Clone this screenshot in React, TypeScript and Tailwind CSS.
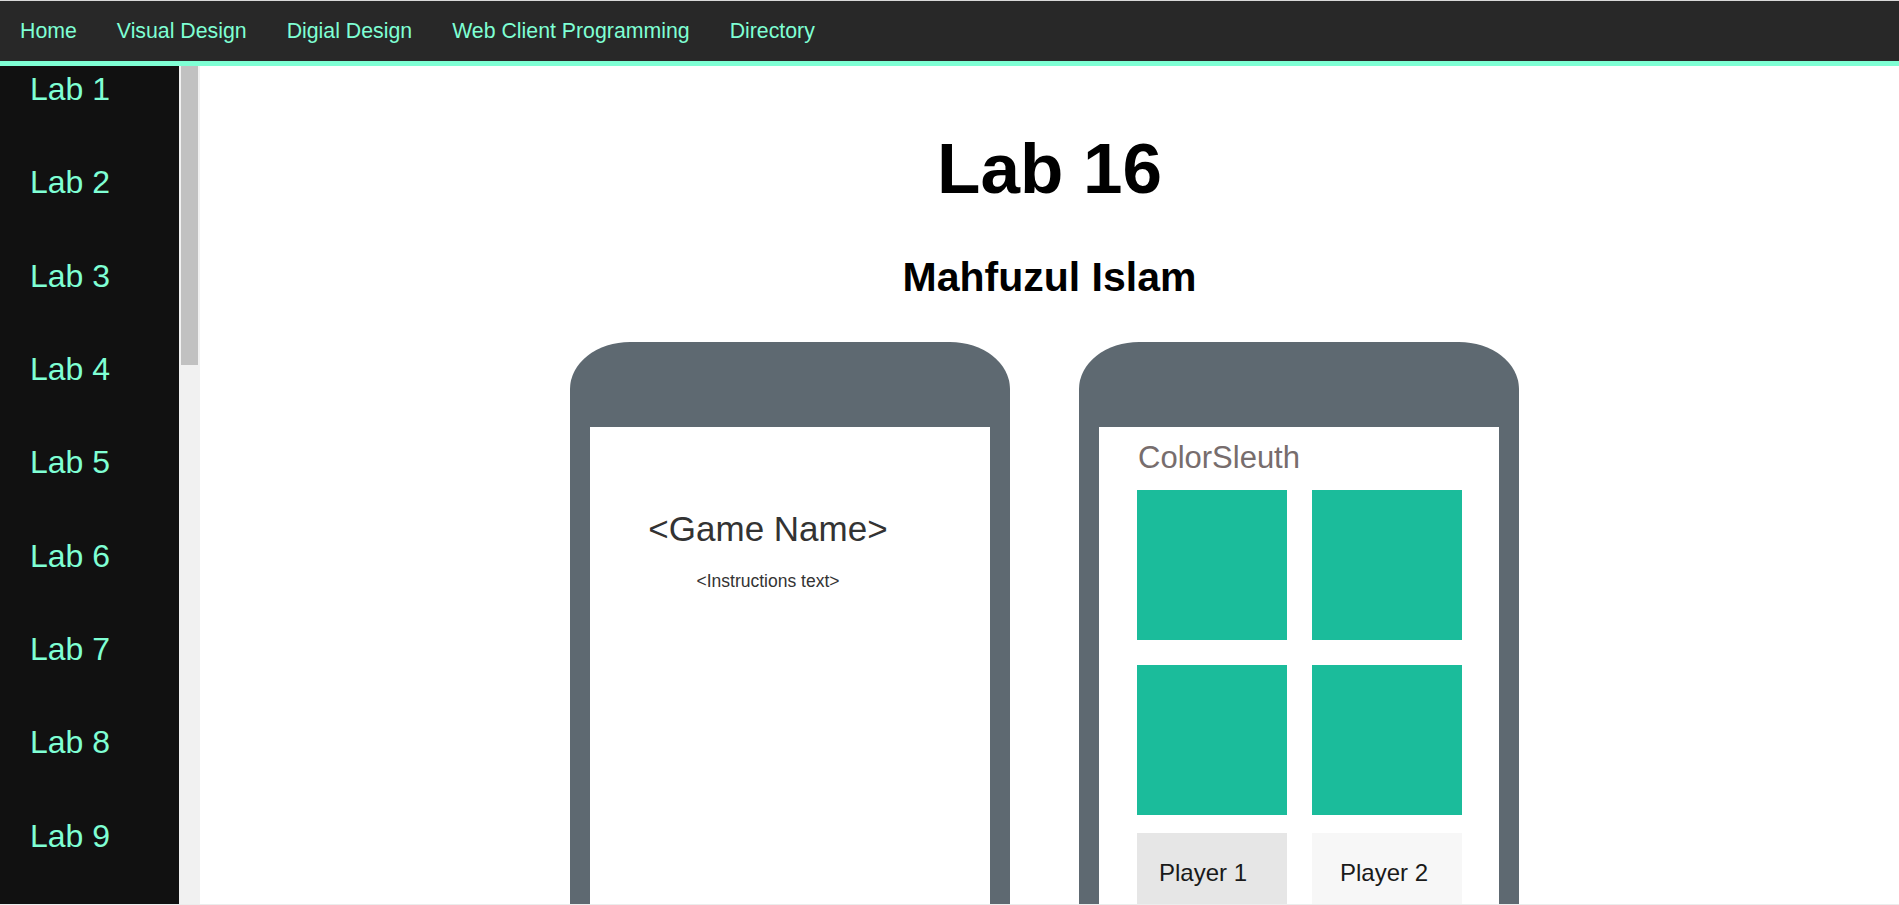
const navItems = ["Home", "Visual Design", "Digial Design", "Web Client Programming", "Directory"];
const labs = Array.from({ length: 9 }, (_, i) => `Lab ${i + 1}`);

function Phone({ children }: { children?: React.ReactNode }) {
  return (
    <div className="h-[600px] w-[440px] shrink-0 rounded-tl-[60px_47px] rounded-tr-[60px_47px] bg-[#5e6971] px-[20px] pt-[85px]">
      <div className="h-full bg-white">{children}</div>
    </div>
  );
}

export default function App() {
  return (
    <div className="flex h-[905px] flex-col overflow-hidden bg-white font-['Liberation_Sans',Arial,sans-serif]">
      <nav className="flex h-[66px] shrink-0 items-center border-t border-b-[5px] border-t-[#d9d9d9] border-b-[#7fffd4] bg-[#282828]">
        {navItems.map((item) => (
          <a key={item} href="#" className="px-5 text-[21.3px] leading-[24px] text-[#7fffd4]">
            {item}
          </a>
        ))}
      </nav>

      <div className="flex min-h-0 flex-1 border-b border-[#ececec]">
        <aside className="w-[179px] shrink-0 bg-[#111111] pt-[5px]">
          {labs.map((lab) => (
            <div key={lab} className="h-[93.33px] pl-[30px] text-[32px] leading-[37px] text-[#7fffd4]">
              {lab}
            </div>
          ))}
        </aside>
        {/* fake scrollbar */}
        <div className="w-[21px] shrink-0 bg-[#f1f1f1] pl-[2px] pr-[2px]">
          <div className="h-[299px] bg-[#c1c1c1]" />
        </div>

        <main className="min-w-0 flex-1 overflow-hidden">
          <h1 className="mt-[61px] text-center text-[71px] font-bold leading-[83px] text-black">Lab 16</h1>
          <h2 className="mt-[44px] text-center text-[41px] font-bold leading-[47px] text-black">Mahfuzul Islam</h2>

          <div className="mt-[41px] flex justify-center gap-[69px] pr-[10px]">
            <Phone>
              <div className="w-[356px] pt-[82px] text-center text-[#333333]">
                <div className="text-[35px] leading-[40px]">&lt;Game Name&gt;</div>
                <div className="mt-[22px] text-[17.5px] leading-[20px]">&lt;Instructions text&gt;</div>
              </div>
            </Phone>

            <Phone>
              <div className="pl-[38px] pt-[13px]">
                <div className="pl-[1px] text-[31px] leading-[36px] text-[#776d6d]">ColorSleuth</div>
                <div className="mt-[14px] grid w-[325px] grid-cols-2 gap-[25px]">
                  {[0, 1, 2, 3].map((i) => (
                    <div key={i} className="h-[150px] bg-[#1bbc9b]" />
                  ))}
                </div>
                <div className="mt-[18px] flex gap-[25px]">
                  <div className="h-[100px] w-[150px] bg-[#e6e6e6] pl-[22px] pt-[26px] text-[24px] leading-[28px] text-[#1a1a1a]">
                    Player 1
                  </div>
                  <div className="h-[100px] w-[150px] bg-[#f7f7f7] pl-[28px] pt-[26px] text-[24px] leading-[28px] text-[#1a1a1a]">
                    Player 2
                  </div>
                </div>
              </div>
            </Phone>
          </div>
        </main>
      </div>
    </div>
  );
}
